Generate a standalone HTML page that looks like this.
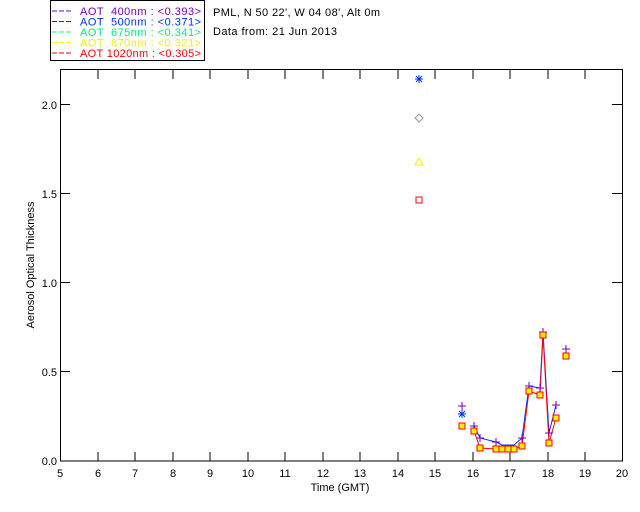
<!DOCTYPE html><html><head><style>body{margin:0;background:#fff}svg{display:block}text{font-family:"Liberation Sans",sans-serif;font-size:11px;white-space:pre}</style></head><body>
<svg width="640" height="512" xmlns="http://www.w3.org/2000/svg">
<rect x="50.5" y="0.5" width="154" height="60" fill="#fff" stroke="#000"/>
<g font-size="11">
<line x1="52" y1="11" x2="72" y2="11" stroke="#7000c0" stroke-dasharray="5,2"/><text x="80" y="15" fill="#7000c0" textLength="121" lengthAdjust="spacing">AOT  400nm : &lt;0.393&gt;</text>
<line x1="52" y1="21.5" x2="72" y2="21.5" stroke="#0030ff" stroke-dasharray="5,2"/><text x="80" y="25.5" fill="#0030ff" textLength="121" lengthAdjust="spacing">AOT  500nm : &lt;0.371&gt;</text>
<line x1="52" y1="32" x2="72" y2="32" stroke="#00ff80" stroke-dasharray="5,2"/><text x="80" y="36" fill="#00ee80" textLength="121" lengthAdjust="spacing">AOT  675nm : &lt;0.341&gt;</text>
<line x1="52" y1="42.5" x2="72" y2="42.5" stroke="#ffff00" stroke-dasharray="5,2"/><text x="80" y="46.5" fill="#f0f000" textLength="121" lengthAdjust="spacing">AOT  870nm : &lt;0.321&gt;</text>
<line x1="52" y1="53" x2="72" y2="53" stroke="#ff0000" stroke-dasharray="5,2"/><text x="80" y="57" fill="#ff0000" textLength="121" lengthAdjust="spacing">AOT 1020nm : &lt;0.305&gt;</text>
</g>
<text x="213" y="16" textLength="167" lengthAdjust="spacing">PML, N 50 22', W 04 08', Alt 0m</text>
<text x="213" y="35" textLength="124" lengthAdjust="spacing">Data from: 21 Jun 2013</text>
<rect x="60.5" y="69.5" width="562" height="391.5" fill="none" stroke="#000"/>
<g stroke="#000">
<path d="M98 461v-9M135 461v-9M173 461v-9M210 461v-9M248 461v-9M285 461v-9M323 461v-9M360 461v-9M398 461v-9M435 461v-9M473 461v-9M510 461v-9M548 461v-9M585 461v-9
M98 70v9M135 70v9M173 70v9M210 70v9M248 70v9M285 70v9M323 70v9M360 70v9M398 70v9M435 70v9M473 70v9M510 70v9M548 70v9M585 70v9
M60 371.5h10M60 282.5h10M60 193.5h10M60 104.5h10M622 371.5h-10M622 282.5h-10M622 193.5h-10M622 104.5h-10"/>
</g>
<g text-anchor="middle" font-size="11">
<text x="60" y="477">5</text><text x="98" y="477">6</text><text x="135" y="477">7</text><text x="173" y="477">8</text><text x="210" y="477">9</text><text x="248" y="477">10</text><text x="285" y="477">11</text><text x="323" y="477">12</text><text x="360" y="477">13</text><text x="398" y="477">14</text><text x="435" y="477">15</text><text x="473" y="477">16</text><text x="510" y="477">17</text><text x="548" y="477">18</text><text x="585" y="477">19</text><text x="622" y="477">20</text>
<text x="340" y="491">Time (GMT)</text>
</g>
<g text-anchor="end" font-size="11"><text x="57" y="465">0.0</text><text x="57" y="376">0.5</text><text x="57" y="287">1.0</text><text x="57" y="198">1.5</text><text x="57" y="109">2.0</text></g>
<text transform="translate(34,265) rotate(-90)" text-anchor="middle" font-size="11">Aerosol Optical Thickness</text>
<polyline fill="none" stroke="#0030ff" points="474,426 480,438 496,442 502,445 508,445 514,445 522,438 529,386 540,388 543,332 549,433 556,405"/>
<polyline fill="none" stroke="#ff0000" points="474,431 480,448 496,449 502,449 508,449 514,449 522,446 529,391 540,395 543,335 549,443 556,418"/>
<g fill="none" stroke="#7000c0">
<path d="M462 402v8M458 406h8M474 422v8M470 426h8M480 434v8M476 438h8M496 438v8M492 442h8M522 434v8M518 438h8M529 382v8M525 386h8M540 384v8M536 388h8M543 328v8M539 332h8M549 429v8M545 433h8M556 401v8M552 405h8M566 345v8M562 349h8"/>
</g>
<g stroke="#0030ff"><path d="M419 75v8M415 79h8M416 76l6 6M422 76l-6 6M462 410v8M458 414h8M459 411l6 6M465 411l-6 6"/></g>
<path d="M419 114l4 4-4 4-4-4z" fill="none" stroke="#999"/>
<path d="M419 158l4 7h-8z" fill="none" stroke="#f0f000"/>
<g fill="#f0f000" stroke="#ff0000">
<rect x="416" y="197" width="6" height="6" fill="none"/>
<rect x="459" y="423" width="6" height="6"/><rect x="471" y="428" width="6" height="6"/><rect x="477" y="445" width="6" height="6"/><rect x="493" y="446" width="6" height="6"/><rect x="499" y="446" width="6" height="6"/><rect x="505" y="446" width="6" height="6"/><rect x="511" y="446" width="6" height="6"/><rect x="519" y="443" width="6" height="6"/><rect x="526" y="388" width="6" height="6"/><rect x="537" y="392" width="6" height="6"/><rect x="540" y="332" width="6" height="6"/><rect x="546" y="440" width="6" height="6"/><rect x="553" y="415" width="6" height="6"/><rect x="563" y="353" width="6" height="6"/>
</g>
</svg></body></html>
